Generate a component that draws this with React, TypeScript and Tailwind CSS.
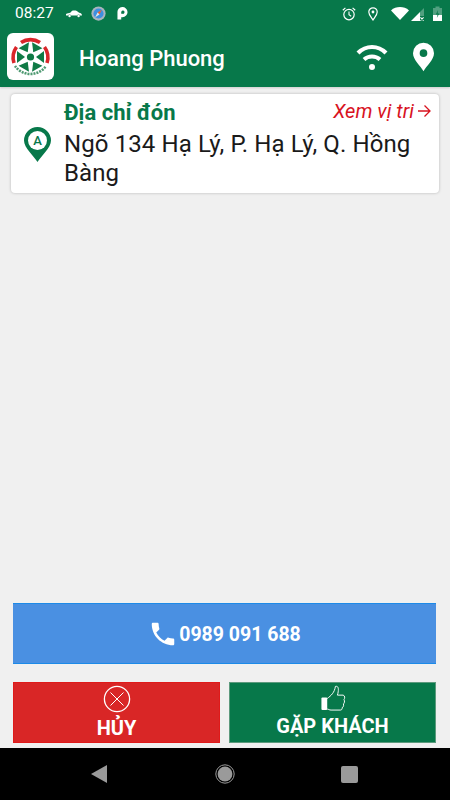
import React from "react";

function Logo() {
  const tris = [30, 90, 150, 210, 270, 330];
  return (
    <svg viewBox="0 0 47 47" className="w-[47px] h-[47px]">
      <rect x="0" y="0" width="47" height="47" rx="6" fill="#ffffff" />
      <path d="M14 9.5 A17 17 0 0 1 33 9.5" fill="none" stroke="#d9262a" strokeWidth="3.6" />
      <path d="M7 30 A18 18 0 0 1 9.5 14" fill="none" stroke="#d9262a" strokeWidth="3.6" />
      <path d="M40 30 A18 18 0 0 0 37.5 14" fill="none" stroke="#d9262a" strokeWidth="3.6" />
      {tris.map((a) => (
        <polygon key={a} points="23.5,18.5 17.5,10.5 29.5,10.5" fill="#0f7a45" transform={`rotate(${a} 23.5 24)`} />
      ))}
      <circle cx="23.5" cy="24" r="3.6" fill="#0f7a45" />
      <path d="M8 33 A19 19 0 0 0 39 33" fill="none" stroke="#4f9a72" strokeWidth="2.6" strokeDasharray="2 1" />
    </svg>
  );
}

function StatusLeft() {
  return (
    <div className="flex items-center">
      <span className="text-[15.5px] text-white leading-none ml-[15px] w-[51px]">08:27</span>
      <svg viewBox="0 0 17 8" className="w-[16px] h-[8px] mr-[9px]">
        <path d="M0 4 C1.5 3 3 2.8 4.5 2.6 L6.5 .6 C8 .2 10 .2 11.5 .8 L14 2.8 C15.5 3 17 3.6 17 5.6 H15 A1.7 1.7 0 0 0 11.8 5.6 H5.4 A1.7 1.7 0 0 0 2.2 5.6 H0 Z" fill="#fff" />
        <circle cx="3.8" cy="6.2" r="1.3" fill="#fff" />
        <circle cx="13.4" cy="6.2" r="1.3" fill="#fff" />
      </svg>
      <svg viewBox="0 0 16 16" className="w-[15px] h-[15px] mr-[11px]">
        <circle cx="8" cy="8" r="7.6" fill="#a9b4bd" />
        <circle cx="8" cy="8" r="5.4" fill="#3d8fe0" />
        <polygon points="11.5,4 9,9 7,7" fill="#f0622d" />
        <polygon points="4.5,12 7,7 9,9" fill="#e8e8e8" />
      </svg>
      <svg viewBox="0 0 12 14" className="w-[11px] h-[13px]">
        <path d="M0.5 13.5 V6 A5.5 5.5 0 1 1 6 11 H4.6 V13.5 Z M4.6 7.4 H6 A1.8 1.8 0 1 0 4.6 5.5 Z" fill="#fff" fillRule="evenodd" />
      </svg>
    </div>
  );
}

function StatusRight() {
  return (
    <div className="flex items-center">
      <svg viewBox="0 0 14 14" className="w-[14px] h-[14px] mr-[12px]" fill="none" stroke="#fff">
        <circle cx="7" cy="7.6" r="5.2" strokeWidth="1.2" />
        <path d="M7 4.6 V7.8 L9.2 9.2" strokeWidth="1.1" />
        <path d="M.8 3.2 L3.4 .9 M13.2 3.2 L10.6 .9" strokeWidth="1.2" />
      </svg>
      <svg viewBox="0 0 10 14" className="w-[10px] h-[14px] mr-[13px]" fill="none" stroke="#fff">
        <path d="M5 13 C3.5 10.5 .8 8 .8 5 A4.2 4.2 0 0 1 9.2 5 C9.2 8 6.5 10.5 5 13 Z" strokeWidth="1.2" />
        <circle cx="5" cy="5" r="1.4" fill="#fff" stroke="none" />
      </svg>
      <svg viewBox="0 0 18 13" className="w-[18px] h-[13px] mr-[2px]">
        <path d="M0 3.4 C5 -1 13 -1 18 3.4 L9 13 Z" fill="#fff" />
      </svg>
      <svg viewBox="0 0 13 14" className="w-[13px] h-[14px] mr-[9px]">
        <path d="M0 14 L9 5 V14 Z" fill="#fff" />
        <path d="M9 5 L13 1 V9 H9 Z" fill="#fff" fillOpacity="0.3" />
        <path d="M9.4 10.4 L12.6 13.6 M12.6 10.4 L9.4 13.6" stroke="#fff" strokeWidth="1.1" />
      </svg>
      <svg viewBox="0 0 9 15" className="w-[9px] h-[15px] mr-[8px]">
        <path d="M0 2 H2.5 V.5 H6.5 V2 H9 V15 H0 Z" fill="#fff" fillOpacity="0.3" />
        <path d="M0 9 H9 V15 H0 Z" fill="#fff" />
        <path d="M5 4 L2.8 8.5 H4.6 L3.8 12 L6.4 7.5 H4.6 Z" fill="#07784a" />
      </svg>
    </div>
  );
}

export default function App() {
  return (
    <div className="w-[450px] h-[800px] flex flex-col bg-[#f0f0f0] overflow-hidden font-['Roboto',sans-serif]">
      <header className="h-[87px] bg-[#07784a] flex flex-col shrink-0 shadow-[0_1px_2px_rgba(0,0,0,0.15)]">
        <div className="h-[27px] flex items-center justify-between">
          <StatusLeft />
          <StatusRight />
        </div>
        <div className="flex items-center pl-[7px] pr-[16px] h-[60px] pb-[2px]">
          <Logo />
          <span className="ml-[25px] mt-[5px] text-[22px] font-medium text-white leading-none">Hoang Phuong</span>
          <div className="ml-auto flex items-center">
            <svg viewBox="0 0 32 28" className="w-[32px] h-[28px] mr-[25px] mt-[2px]">
              <path d="M2 10 C10 2 22 2 30 10" fill="none" stroke="#fff" strokeWidth="4.2" />
              <path d="M8 16.5 C12.5 12.5 19.5 12.5 24 16.5" fill="none" stroke="#fff" strokeWidth="4" />
              <circle cx="16" cy="24" r="3" fill="#fff" />
            </svg>
            <svg viewBox="0 0 22 30" className="w-[21px] h-[30px] mt-[2px]">
              <path d="M11 30 C8 24 0 18 0 11 A11 11 0 0 1 22 11 C22 18 14 24 11 30 Z M11 7 A4 4 0 1 0 11 15 A4 4 0 1 0 11 7 Z" fill="#fff" fillRule="evenodd" />
            </svg>
          </div>
        </div>
      </header>

      <section className="mx-[11px] mt-[7px] h-[99px] bg-white rounded-[4px] shadow-[0_0_3px_rgba(0,0,0,0.25)] flex shrink-0 relative">
        <div className="w-[53px] shrink-0 flex justify-center pt-[33px]">
          <svg viewBox="0 0 27 35" className="w-[27px] h-[35px]">
            <path d="M13.5 35 C10 29 0 21 0 13.5 A13.5 13.5 0 0 1 27 13.5 C27 21 17 29 13.5 35 Z" fill="#07784a" />
            <circle cx="13.5" cy="13.5" r="9.5" fill="#fff" />
            <text x="13.5" y="18" textAnchor="middle" fontSize="13" fontWeight="500" fill="#07784a" fontFamily="Roboto, sans-serif">A</text>
          </svg>
        </div>
        <div className="flex-1 min-w-0 pr-[8px]">
          <div className="flex items-start justify-between pt-[7px]">
            <span className="text-[22px] leading-[24px] font-bold text-[#07784a]">Địa chỉ đón</span>
            <span className="flex items-center text-[20px] leading-[22px] italic text-[#d8131f] font-normal mt-[-1px]">
              Xem vị tri
              <svg viewBox="0 0 14 14" className="w-[14px] h-[14px] ml-[3px]" fill="none" stroke="#d8131f" strokeWidth="1.3">
                <path d="M1 7 H13 M7.5 1.5 L13 7 L7.5 12.5" />
              </svg>
            </span>
          </div>
          <p className="text-[24px] leading-[29px] text-[#1a1a1a] mt-[5px] tracking-[0.1px]">Ngõ 134 Hạ Lý, P. Hạ Lý, Q. Hồng Bàng</p>
        </div>
      </section>

      <div className="flex-1" />

      <div className="ml-[13px] mr-[14px] flex flex-col gap-[18px] mb-[5px]">
        <button className="h-[61px] bg-[#4a90e2] border-y border-[#1c8ae8] flex items-center justify-center text-white">
          <svg viewBox="0 0 24 24" className="w-[30px] h-[30px] mr-[1px]">
            <path d="M6.62 10.79c1.44 2.83 3.76 5.14 6.59 6.59l2.2-2.2c.27-.27.67-.36 1.02-.24 1.12.37 2.33.57 3.57.57.55 0 1 .45 1 1V20c0 .55-.45 1-1 1-9.39 0-17-7.61-17-17 0-.55.45-1 1-1h3.5c.55 0 1 .45 1 1 0 1.25.2 2.45.57 3.57.11.35.03.74-.25 1.02l-2.2 2.2z" fill="#fff" />
          </svg>
          <span className="text-[19.5px] font-bold leading-none mt-[2px]">0989 091 688</span>
        </button>
        <div className="flex gap-[9px]">
          <button className="flex-1 h-[61px] bg-[#d92626] border border-[#e01a1a] flex flex-col items-center pt-[2px] text-white">
            <svg viewBox="0 0 28 28" className="w-[28px] h-[28px] shrink-0" fill="none" stroke="#fff">
              <circle cx="14" cy="14" r="12.6" strokeWidth="1.3" />
              <path d="M7.5 7.5 L20.5 20.5 M20.5 7.5 L7.5 20.5" strokeWidth="1" />
            </svg>
            <span className="text-[20px] font-bold leading-none mt-[5px]">HỦY</span>
          </button>
          <button className="flex-1 h-[61px] bg-[#07784a] border border-[#5c9a7d] flex flex-col items-center pt-[2px] text-white">
            <svg viewBox="0 0 26 28" className="w-[26px] h-[27px] shrink-0 mb-[4px]" fill="none" stroke="#fff" strokeWidth="1">
              <rect x="1" y="13" width="6" height="13" rx="1" fill="#fff" stroke="none" />
              <path d="M7 14 C11 11 14.5 8 15.5 1.5 C18.5 .5 19.5 4 17.6 10.5 H23.5 C25.5 11 25.5 14 24.4 15 C25.4 17 24.8 19 23.8 19.6 C24.4 21.6 23.6 23 22.4 23.6 C22.8 25.2 21.8 26 20.5 26 H11 C9 26 8.5 25 7 25" />
            </svg>
            <span className="text-[20px] font-bold leading-none">GẶP KHÁCH</span>
          </button>
        </div>
      </div>

      <nav className="h-[52px] bg-black flex items-center shrink-0 pl-[91px]">
        <svg viewBox="0 0 16 18" className="w-[16px] h-[18px]">
          <path d="M16 0 V18 L0 9 Z" fill="#9a9a9a" />
        </svg>
        <svg viewBox="0 0 20 20" className="w-[20px] h-[20px] ml-[108px]">
          <circle cx="10" cy="10" r="9.2" fill="none" stroke="#9a9a9a" strokeWidth="1" />
          <circle cx="10" cy="10" r="7.4" fill="#9a9a9a" />
        </svg>
        <div className="w-[17px] h-[17px] rounded-[2px] bg-[#9a9a9a] ml-[106px]" />
      </nav>
    </div>
  );
}
